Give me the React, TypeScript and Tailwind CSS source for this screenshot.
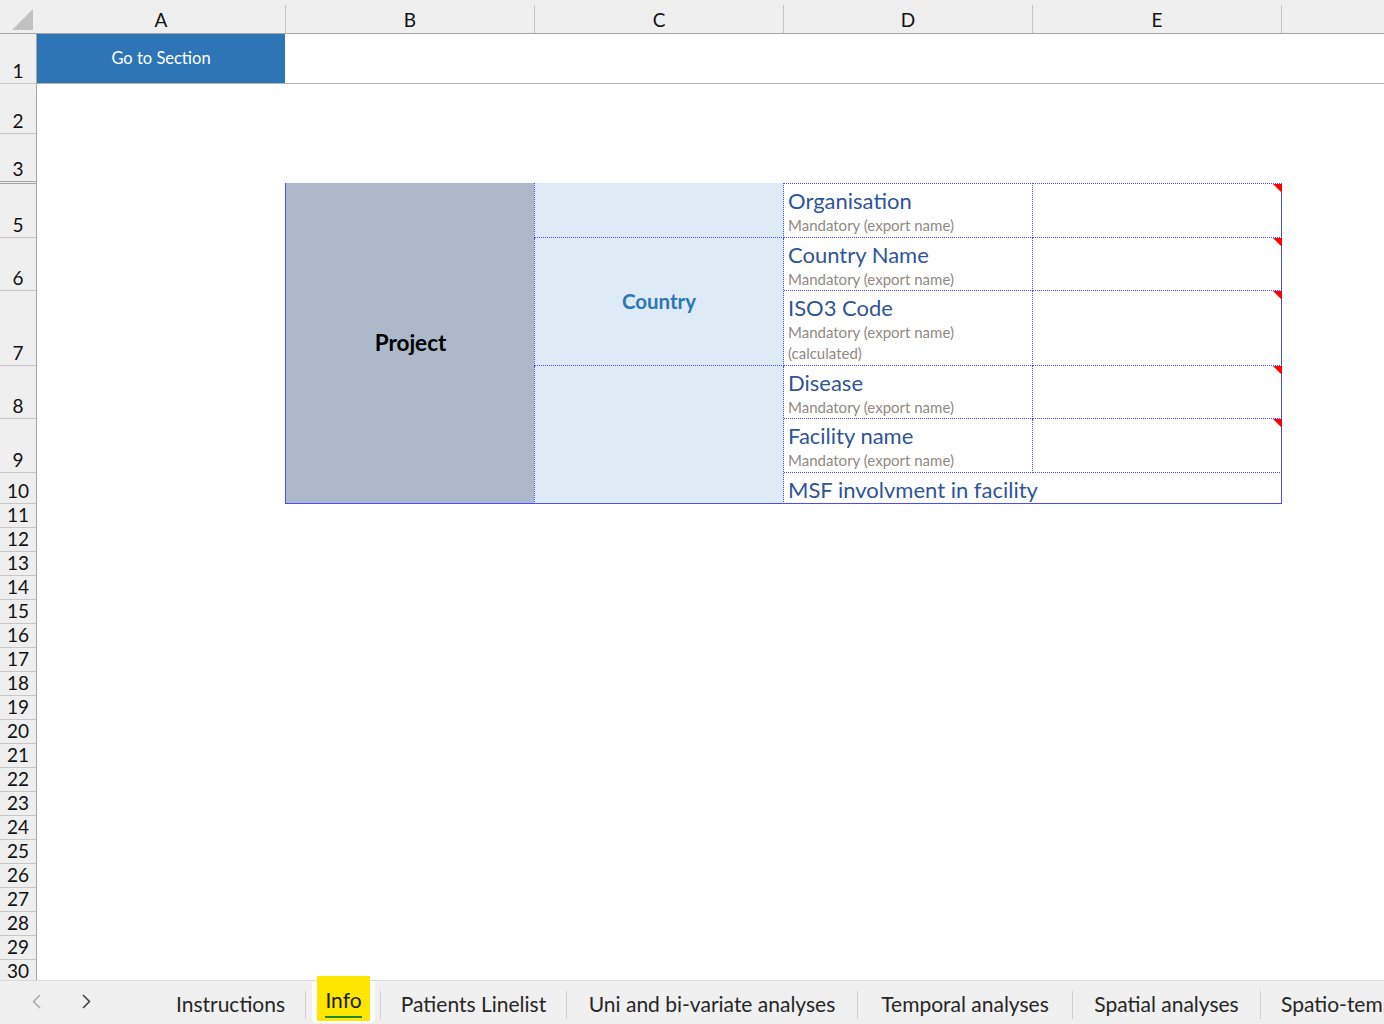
import React from "react";

const BLUE_LINE = "border-[#4b4bff]";

type Row = { n: number; h: string; dbl?: boolean };

const ROWS: Row[] = [
  { n: 1, h: "h-[50px]" },
  { n: 2, h: "h-[50px]" },
  { n: 3, h: "h-[50px]", dbl: true },
  { n: 5, h: "h-[54px]" },
  { n: 6, h: "h-[53px]" },
  { n: 7, h: "h-[75px]" },
  { n: 8, h: "h-[53px]" },
  { n: 9, h: "h-[54px]" },
  { n: 10, h: "h-[31px]" },
  ...Array.from({ length: 20 }).map((_, i) => ({ n: 11 + i, h: "h-[24px]" })),
];

const COLS = ["A", "B", "C", "D", "E"];

const TABS = [
  { name: "Instructions", w: "w-[149px]" },
  { name: "Info", w: "w-[74px]", active: true },
  { name: "Patients Linelist", w: "w-[185px]" },
  { name: "Uni and bi-variate analyses", w: "w-[290px]" },
  { name: "Temporal analyses", w: "w-[214px]" },
  { name: "Spatial analyses", w: "w-[187px]" },
];

function Flag() {
  return (
    <div className="absolute right-0 top-0 h-[9px] w-[9px] bg-[#ff0000] [clip-path:polygon(0_0,100%_0,100%_100%)]" />
  );
}

function Field({ title, sub }: { title: string; sub?: string[] }) {
  return (
    <div className="pl-[4px] pt-[3px]">
      <div className="whitespace-nowrap text-[22px] leading-[28px] text-[#2f5597]">{title}</div>
      {sub?.map((s) => (
        <div key={s} className="whitespace-nowrap text-[15px] leading-[21px] text-[#8f8a84]">
          {s}
        </div>
      ))}
    </div>
  );
}

function Sep() {
  return <div className="mt-[10px] h-[28px] w-px shrink-0 bg-[#cfcfcf]" />;
}

export default function App() {
  const mand = ["Mandatory (export name)"];
  const dCell = `relative overflow-hidden border-r border-b border-dotted ${BLUE_LINE}`;
  const eCell = `relative border-b border-dotted ${BLUE_LINE}`;

  return (
    <div className="flex h-[1024px] w-[1384px] flex-col overflow-hidden bg-white font-['Lato',sans-serif] text-[#111]">
      {/* column headers */}
      <div className="flex h-[34px] shrink-0 border-b border-[#a6a6a6] bg-[#efefef]">
        <div className="w-[37px] shrink-0">
          <svg width="37" height="33" viewBox="0 0 37 33">
            <polygon points="33,9 33,30 12,30" fill="#c2c2c2" />
          </svg>
        </div>
        {COLS.map((c) => (
          <div
            key={c}
            className="mt-[5px] flex w-[249px] shrink-0 items-center justify-center border-r border-[#c4c4c4] text-[19px] leading-none"
          >
            {c}
          </div>
        ))}
      </div>

      {/* sheet */}
      <div className="flex h-[946px] shrink-0 overflow-hidden">
        <div className="w-[37px] shrink-0 border-r border-[#a6a6a6] bg-[#efefef]">
          {ROWS.map((r) => (
            <div
              key={r.n}
              className={`flex items-end justify-center text-[19px] leading-[24px] ${r.h} ${
                r.dbl ? "border-b-[3px] border-double border-[#a6a6a6]" : "border-b border-[#c6c6c6]"
              }`}
            >
              {r.n}
            </div>
          ))}
        </div>

        <div className="flex-1">
          <div className="flex h-[50px] border-b border-[#b4b4b4]">
            <div className="flex w-[248px] items-center justify-center bg-[#2e75b6] text-[16.5px] text-white">
              Go to Section
            </div>
          </div>
          <div className="h-[99px]" />

          <div className="ml-[248px] grid w-[997px] grid-cols-[250px_249px_249px_249px] grid-rows-[55px_53px_75px_53px_54px_31px]">
            <div
              className={`col-start-1 row-span-6 row-start-1 flex items-center justify-center border-l border-b bg-[#acb9ca] ${BLUE_LINE}`}
            >
              <span className="text-[22.5px] font-bold text-black">Project</span>
            </div>
            <div className={`col-start-2 row-start-1 -ml-px border-l border-r border-b border-dotted bg-[#ddebf7] ${BLUE_LINE}`} />
            <div
              className={`col-start-2 row-span-2 row-start-2 -ml-px flex items-center justify-center border-l border-r border-b border-dotted bg-[#ddebf7] ${BLUE_LINE}`}
            >
              <span className="text-[20.5px] font-bold text-[#2e75b6]">Country</span>
            </div>
            <div className={`col-start-2 row-span-3 row-start-4 -ml-px border-l border-r border-dotted bg-[#ddebf7] ${BLUE_LINE}`} />
            <div className={`col-start-2 row-start-6 self-end border-b ${BLUE_LINE}`} />

            <div className={`col-start-3 row-start-1 border-t ${dCell}`}>
              <Field title="Organisation" sub={mand} />
            </div>
            <div className={`col-start-4 row-start-1 border-t ${eCell}`}>
              <Flag />
            </div>

            <div className={`col-start-3 row-start-2 ${dCell}`}>
              <Field title="Country Name" sub={mand} />
            </div>
            <div className={`col-start-4 row-start-2 ${eCell}`}>
              <Flag />
            </div>

            <div className={`col-start-3 row-start-3 ${dCell}`}>
              <Field title="ISO3 Code" sub={["Mandatory (export name)", "(calculated)"]} />
            </div>
            <div className={`col-start-4 row-start-3 ${eCell}`}>
              <Flag />
            </div>

            <div className={`col-start-3 row-start-4 ${dCell}`}>
              <Field title="Disease" sub={mand} />
            </div>
            <div className={`col-start-4 row-start-4 ${eCell}`}>
              <Flag />
            </div>

            <div className={`col-start-3 row-start-5 ${dCell}`}>
              <Field title="Facility name" sub={mand} />
            </div>
            <div className={`col-start-4 row-start-5 ${eCell}`}>
              <Flag />
            </div>

            <div className={`col-span-2 col-start-3 row-start-6 overflow-hidden border-b ${BLUE_LINE}`}>
              <Field title="MSF involvment in facility" />
            </div>

            <div className={`pointer-events-none col-start-4 row-span-6 row-start-1 border-r ${BLUE_LINE}`} />
          </div>
        </div>
      </div>

      {/* sheet tabs */}
      <div className="flex h-[44px] shrink-0 border-t border-[#dadada] bg-[#f0f0f0] text-[21px] text-[#262626]">
        <div className="flex w-[156px] shrink-0 items-center gap-[41px] pb-[2px] pl-[32px]">
          <svg width="9" height="15" viewBox="0 0 9 15">
            <polyline points="8,1 1.5,7.5 8,14" fill="none" stroke="#a8a8a8" strokeWidth="1.5" />
          </svg>
          <svg width="9" height="15" viewBox="0 0 9 15">
            <polyline points="1,1 7.5,7.5 1,14" fill="none" stroke="#404040" strokeWidth="1.5" />
          </svg>
        </div>
        {TABS.map((t) => (
          <React.Fragment key={t.name}>
            {t.active ? (
              <div className={`relative flex shrink-0 justify-center ${t.w}`}>
                <div className="h-[42px] w-[63px] rounded-b-[5px] bg-white" />
                <div className="absolute left-[11px] top-[-5px] flex h-[45px] w-[53px] flex-col items-center bg-[#ffe600] pt-[12px]">
                  <span className="leading-[24px] text-[#1a1a1a]">Info</span>
                  <div className="mt-[4px] h-[2px] w-[37px] bg-[#1f8a1f]" />
                </div>
              </div>
            ) : (
              <div className={`flex shrink-0 items-center justify-center pt-[3px] ${t.w}`}>
                <span className="whitespace-nowrap">{t.name}</span>
              </div>
            )}
            <Sep />
          </React.Fragment>
        ))}
        <div className="flex items-center whitespace-nowrap pl-[20px] pt-[3px]">Spatio-temporal analyses</div>
      </div>
    </div>
  );
}
